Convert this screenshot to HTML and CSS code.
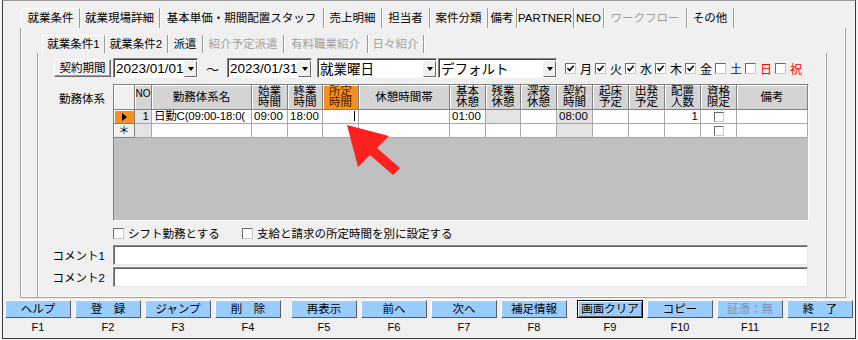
FILE: index.html
```html
<!DOCTYPE html>
<html lang="ja">
<head>
    <meta charset="UTF-8">
    <title>就業条件</title>
    <link rel="stylesheet" href="styles.css">
</head>
<body>

<div class="window">
    <!-- 上段タブ -->
    <div class="outer-tabs">
        <span class="tab on">就業条件</span>
        <span class="tab">就業現場詳細</span>
        <span class="tab">基本単価・期間配置スタッフ</span>
        <span class="tab">売上明細</span>
        <span class="tab">担当者</span>
        <span class="tab">案件分類</span>
        <span class="tab">備考</span>
        <span class="tab">PARTNER</span>
        <span class="tab">NEO</span>
        <span class="tab off">ワークフロー</span>
        <span class="tab">その他</span>
    </div>

    <div class="outer-pane">
        <!-- 下段タブ -->
        <div class="inner-tabs">
            <span class="tab on">就業条件1</span>
            <span class="tab">就業条件2</span>
            <span class="tab">派遣</span>
            <span class="tab off">紹介予定派遣</span>
            <span class="tab off">有料職業紹介</span>
            <span class="tab off">日々紹介</span>
        </div>

        <div class="inner-pane">
            <!-- 契約期間 -->
            <div class="period">
                <div class="btn">契約期間</div>
                <div class="combo date"><span class="val">2023/01/01</span><span class="drop"></span></div>
                <span class="wave">～</span>
                <div class="combo date"><span class="val">2023/01/31</span><span class="drop"></span></div>
                <div class="combo sel1"><span class="val">就業曜日</span><span class="drop"></span></div>
                <div class="combo sel2"><span class="val">デフォルト</span><span class="drop"></span></div>
                <div class="days">
                    <label class="day"><span class="cb on"><svg viewBox="0 0 9 9"><polyline points="1.5,4.3 3.6,6.6 7.6,1.8"/></svg></span>月</label>
                    <label class="day"><span class="cb on"><svg viewBox="0 0 9 9"><polyline points="1.5,4.3 3.6,6.6 7.6,1.8"/></svg></span>火</label>
                    <label class="day"><span class="cb on"><svg viewBox="0 0 9 9"><polyline points="1.5,4.3 3.6,6.6 7.6,1.8"/></svg></span>水</label>
                    <label class="day"><span class="cb on"><svg viewBox="0 0 9 9"><polyline points="1.5,4.3 3.6,6.6 7.6,1.8"/></svg></span>木</label>
                    <label class="day"><span class="cb on"><svg viewBox="0 0 9 9"><polyline points="1.5,4.3 3.6,6.6 7.6,1.8"/></svg></span>金</label>
                    <label class="day sat"><span class="cb"></span>土</label>
                    <label class="day sun"><span class="cb"></span>日</label>
                    <label class="day sun"><span class="cb"></span>祝</label>
                </div>
            </div>

            <!-- 勤務体系 -->
            <div class="grid-row">
                <div class="label top">勤務体系</div>
                <div class="grid">
                    <div class="hc rs-head"></div>
                    <div class="hc no-head">NO</div>
                    <div class="hc">勤務体系名</div>
                    <div class="hc">始業<br>時間</div>
                    <div class="hc">終業<br>時間</div>
                    <div class="hc active">所定<br>時間</div>
                    <div class="hc">休憩時間帯</div>
                    <div class="hc">基本<br>休憩</div>
                    <div class="hc">残業<br>休憩</div>
                    <div class="hc">深夜<br>休憩</div>
                    <div class="hc">契約<br>時間</div>
                    <div class="hc">起床<br>予定</div>
                    <div class="hc">出発<br>予定</div>
                    <div class="hc">配置<br>人数</div>
                    <div class="hc">資格<br>限定</div>
                    <div class="hc">備考</div>

                    <div class="rs cur"><span class="tri"></span></div>
                    <div class="c g num">1</div>
                    <div class="c name">日勤C(09:00-18:0(</div>
                    <div class="c">09:00</div>
                    <div class="c">18:00</div>
                    <div class="c num"><span class="caret"></span></div>
                    <div class="c"></div>
                    <div class="c">01:00</div>
                    <div class="c g"></div>
                    <div class="c"></div>
                    <div class="c g">08:00</div>
                    <div class="c"></div>
                    <div class="c"></div>
                    <div class="c num">1</div>
                    <div class="c mid"><span class="cb small"></span></div>
                    <div class="c"></div>

                    <div class="rs">＊</div>
                    <div class="c g"></div>
                    <div class="c"></div>
                    <div class="c"></div>
                    <div class="c"></div>
                    <div class="c"></div>
                    <div class="c"></div>
                    <div class="c"></div>
                    <div class="c"></div>
                    <div class="c"></div>
                    <div class="c g"></div>
                    <div class="c"></div>
                    <div class="c"></div>
                    <div class="c"></div>
                    <div class="c mid"><span class="cb small"></span></div>
                    <div class="c"></div>
                </div>
            </div>

            <div class="opts">
                <label class="opt first"><span class="cb"></span>シフト勤務とする</label>
                <label class="opt"><span class="cb"></span>支給と請求の所定時間を別に設定する</label>
            </div>

            <div class="comment-row">
                <div class="label">コメント1</div>
                <div class="textbox"></div>
            </div>
            <div class="comment-row second">
                <div class="label">コメント2</div>
                <div class="textbox"></div>
            </div>
        </div>
    </div>

    <!-- ファンクションキー -->
    <div class="fbar">
        <div class="fgroup">
            <div class="fkey"><div class="fbtn">ヘルプ</div><div class="fname">F1</div></div>
            <div class="fkey"><div class="fbtn">登　録</div><div class="fname">F2</div></div>
            <div class="fkey"><div class="fbtn">ジャンプ</div><div class="fname">F3</div></div>
            <div class="fkey"><div class="fbtn">削　除</div><div class="fname">F4</div></div>
        </div>
        <div class="fgroup">
            <div class="fkey"><div class="fbtn">再表示</div><div class="fname">F5</div></div>
            <div class="fkey"><div class="fbtn">前へ</div><div class="fname">F6</div></div>
            <div class="fkey"><div class="fbtn">次へ</div><div class="fname">F7</div></div>
            <div class="fkey"><div class="fbtn">補足情報</div><div class="fname">F8</div></div>
        </div>
        <div class="fgroup">
            <div class="fkey"><div class="fbtn focus">画面クリア</div><div class="fname">F9</div></div>
            <div class="fkey"><div class="fbtn">コピー</div><div class="fname">F10</div></div>
            <div class="fkey"><div class="fbtn disabled">証憑：無</div><div class="fname">F11</div></div>
            <div class="fkey"><div class="fbtn">終　了</div><div class="fname">F12</div></div>
        </div>
    </div>
</div>

<!-- 注記の赤矢印 -->
<svg class="arrow" width="858" height="340" viewBox="0 0 858 340">
    <polygon points="347,125 389,136 377,148 400,168 393,175 370,155 358,167"/>
</svg>

</body>
</html>
```

FILE: styles.css
```css
body {
    margin: 0;
    background: #f4f4f4;
    font-family: "Liberation Sans", "Noto Sans CJK JP", sans-serif;
    font-size: 11.5px;
    color: #000;
}
.window {
    width: 854px;
    height: 339px;
    margin-left: 2px;
    box-sizing: border-box;
    border: 1px solid #3a3a3a;
    border-top-color: #9a9a9a;
    background: #f0f0f0;
}

/* tabs */
.outer-tabs {
    display: grid;
    grid-template-columns: 59px 80px 164px 58px 48px 58px 29px 57px 30px 83px 47px;
    height: 20px;
    margin: 7px 0 0 18px;
}
.inner-tabs {
    display: grid;
    grid-template-columns: 63px 63px 35px 81px 84px 56px;
    height: 18px;
    margin: 7px 0 0 5px;
}
.tab {
    border-right: 1px solid #9a9a9a;
    box-shadow: 1px 0 0 #fff;
    text-align: center;
    white-space: nowrap;
    line-height: 18px;
}
.outer-tabs .tab {
    line-height: 20px;
}
.tab.on {
    border-left: 1px solid #fff;
    border-top: 1px solid #fff;
    line-height: 17px;
}
.outer-tabs .tab.on {
    line-height: 19px;
}
.tab.off {
    color: #a0a0a0;
}

/* panes */
.outer-pane {
    display: flex;
    flex-direction: column;
    width: 826px;
    height: 270px;
    margin-left: 17px;
    box-sizing: border-box;
    padding: 0 18px 0 16px;
    border: 1px solid #a0a0a0;
    border-top: none;
    box-shadow: inset 1px 0 #fff, inset -1px 0 #fff, inset 0 -1px #fff;
}
.inner-pane {
    flex: 1;
    border-left: 1px solid #a0a0a0;
    border-right: 1px solid #a0a0a0;
    box-shadow: inset 1px 0 #fff, inset -1px 0 #fff;
}

/* period row */
.period {
    display: flex;
    align-items: center;
    height: 20px;
    margin: 5px 0 0 16px;
}
.btn {
    width: 57px;
    height: 18px;
    margin-right: 2px;
    box-sizing: border-box;
    border: 1px solid;
    border-color: #fff #696969 #696969 #fff;
    box-shadow: inset -1px -1px #a0a0a0;
    text-align: center;
    line-height: 16px;
}
.combo {
    display: flex;
    align-items: center;
    height: 20px;
    box-sizing: border-box;
    border: 1px solid;
    border-color: #8a8a8a #fff #fff #8a8a8a;
    box-shadow: inset 1px 1px #404040;
    background: #fff;
    font-size: 13.5px;
}
.combo .val {
    flex: 1;
    padding-left: 2px;
    white-space: nowrap;
    overflow: hidden;
}
.drop {
    display: flex;
    align-items: center;
    justify-content: center;
    width: 13px;
    height: 16px;
    margin: 1px 0 0 0;
    box-sizing: border-box;
    border: 1px solid;
    border-color: #f0f0f0 #696969 #696969 #f0f0f0;
    background: #f0f0f0;
}
.drop::after {
    content: "";
    border-top: 4px solid #000;
    border-left: 3.5px solid transparent;
    border-right: 3.5px solid transparent;
}
.date {
    width: 85px;
}
.wave {
    width: 29px;
    text-align: center;
    font-size: 13px;
}
.sel1 {
    width: 120px;
    margin-left: 5px;
}
.sel2 {
    width: 119px;
    margin-left: 1px;
}
.days {
    display: flex;
    margin-left: 8px;
    font-size: 12px;
}
.day {
    display: flex;
    align-items: center;
    gap: 4px;
    width: 30px;
}
.day.sat {
    color: #0000ff;
}
.day.sun {
    color: #ff0000;
}

/* checkbox */
.cb {
    display: inline-flex;
    width: 11px;
    height: 11px;
    flex: none;
    box-sizing: border-box;
    border: 1px solid;
    border-color: #6a6a6a #c8c8c8 #c8c8c8 #6a6a6a;
    background: #fff;
}
.cb svg {
    width: 9px;
    height: 9px;
    fill: none;
    stroke: #000;
    stroke-width: 1.6;
}
.cb.small {
    width: 10px;
    height: 10px;
}

/* grid */
.grid-row {
    display: flex;
    margin-top: 6px;
}
.label {
    width: 67px;
    margin-right: 8px;
    text-align: right;
    white-space: nowrap;
}
.label.top {
    padding-top: 6px;
}
.grid {
    display: grid;
    grid-template-columns: 21px 17px 100px 36px 35px 36px 91px 36px 35px 36px 36px 36px 36px 36px 36px 71px;
    grid-template-rows: 25px 14px 14px;
    align-content: start;
    width: 696px;
    height: 137px;
    box-sizing: border-box;
    border: 1px solid;
    border-color: #808080 #fff #fff #808080;
    background: #c0c0c0;
}
.hc {
    display: flex;
    align-items: center;
    justify-content: center;
    border-right: 1px solid #808080;
    border-bottom: 1px solid #808080;
    box-shadow: inset 1px 1px #fff;
    background: #d4d4d4;
    text-align: center;
    line-height: 11px;
    overflow: hidden;
}
.hc.rs-head {
    background: #f0f0f0;
}
.hc.no-head {
    align-items: flex-start;
    padding-top: 3px;
    font-size: 10px;
}
.hc.active {
    background: #f7901e;
    color: #4a1e00;
}
.rs {
    display: flex;
    align-items: center;
    justify-content: center;
    border-right: 1px solid #808080;
    border-bottom: 1px solid #808080;
    box-shadow: inset 1px 1px #fff;
    background: #f0f0f0;
    font-size: 11px;
    line-height: 13px;
}
.rs.cur {
    background: #f7901e;
}
.tri {
    border-left: 5px solid #000;
    border-top: 4px solid transparent;
    border-bottom: 4px solid transparent;
}
.c {
    padding: 0 2px;
    border-right: 1px solid #a8a8a8;
    border-bottom: 1px solid #a8a8a8;
    background: #fff;
    line-height: 13px;
    white-space: nowrap;
    overflow: hidden;
}
.c.name {
    letter-spacing: -0.2px;
}
.c.g {
    background: #e3e3e3;
}
.c.num {
    text-align: right;
}
.c.mid {
    display: flex;
    align-items: center;
    justify-content: center;
}
.caret {
    display: inline-block;
    width: 1px;
    height: 10px;
    margin: 1px 1px 0 0;
    background: #000;
    vertical-align: top;
}

/* options and comments */
.opts {
    display: flex;
    align-items: center;
    height: 16px;
    margin: 4px 0 0 75px;
}
.opt {
    display: flex;
    align-items: center;
    gap: 4px;
}
.opt.first {
    width: 129px;
}
.comment-row {
    display: flex;
    align-items: center;
    margin-top: 4px;
}
.comment-row.second {
    margin-top: 2px;
}
.textbox {
    width: 695px;
    height: 20px;
    box-sizing: border-box;
    border: 1px solid;
    border-color: #8a8a8a #e6e6e6 #e6e6e6 #8a8a8a;
    box-shadow: inset 1px 1px #606060;
    background: #fff;
}

/* function keys */
.fbar {
    display: flex;
    gap: 10px;
    padding: 2px 0 0 2px;
}
.fgroup {
    display: flex;
    gap: 4px;
}
.fkey {
    width: 66px;
}
.fbtn {
    height: 18px;
    box-sizing: border-box;
    border: 1px solid;
    border-color: #fff #5a5a5a #5a5a5a #fff;
    background: #99ccff;
    text-align: center;
    line-height: 16px;
    white-space: nowrap;
}
.fbtn.focus {
    border-color: #000;
    box-shadow: inset 1px 1px #fff, inset -1px -1px #5a5a5a;
}
.fbtn.disabled {
    color: #7f92a8;
}
.fname {
    height: 15px;
    padding-top: 2px;
    text-align: center;
    font-size: 11px;
    line-height: 15px;
}

.arrow {
    position: absolute;
    left: 0;
    top: 0;
    pointer-events: none;
}
.arrow polygon {
    fill: #ff2020;
}
```
